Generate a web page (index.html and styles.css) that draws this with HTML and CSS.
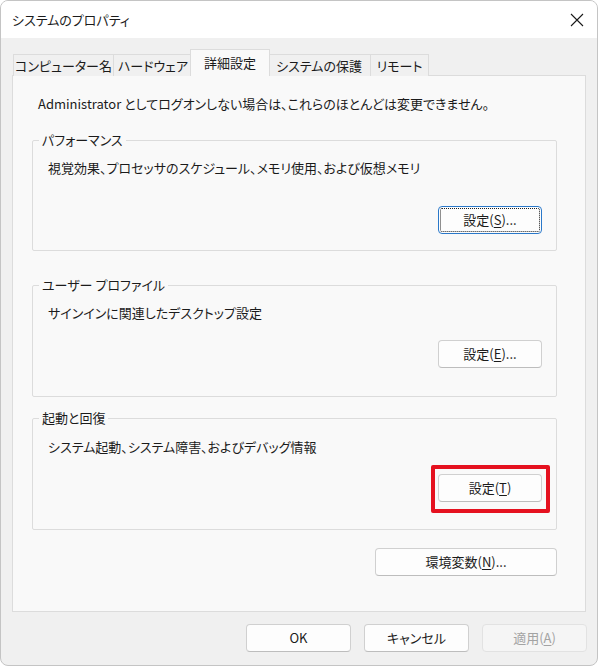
FILE: index.html
```html
<!DOCTYPE html>
<html lang="ja">
<head>
<meta charset="utf-8">
<title>システムのプロパティ</title>
<link rel="stylesheet" href="styles.css">
</head>
<body>
<div class="window">
  <div class="titlebar">
    <span class="title">システムのプロパティ</span>
    <span class="close" aria-label="閉じる">
      <svg width="14" height="14" viewBox="0 0 14 14"><path d="M1 1 L13 13 M13 1 L1 13" stroke="#1a1a1a" stroke-width="1.1" fill="none"/></svg>
    </span>
  </div>
  <div class="body">
    <div class="tabs">
      <div class="tab t1">コンピューター名</div>
      <div class="tab t2">ハードウェア</div>
      <div class="tab t3 active">詳細設定</div>
      <div class="tab t4">システムの保護</div>
      <div class="tab t5">リモート</div>
    </div>
    <div class="panel">
      <p class="intro">Administrator としてログオンしない場合は、これらのほとんどは変更できません。</p>
      <fieldset class="group g1">
        <legend>パフォーマンス</legend>
        <p class="desc">視覚効果、プロセッサのスケジュール、メモリ使用、および仮想メモリ</p>
        <div class="row"><button class="btn focus">設定(<u>S</u>)...</button></div>
      </fieldset>
      <fieldset class="group g2">
        <legend>ユーザー プロファイル</legend>
        <p class="desc">サインインに関連したデスクトップ設定</p>
        <div class="row"><button class="btn">設定(<u>E</u>)...</button></div>
      </fieldset>
      <fieldset class="group g3">
        <legend>起動と回復</legend>
        <p class="desc">システム起動、システム障害、およびデバッグ情報</p>
        <div class="row"><span class="mark"><button class="btn">設定(<u>T</u>)</button></span></div>
      </fieldset>
      <div class="row env"><button class="btn wide">環境変数(<u>N</u>)...</button></div>
    </div>
    <div class="footer">
      <button class="btn fbtn">OK</button>
      <button class="btn fbtn">キャンセル</button>
      <button class="btn fbtn disabled">適用(<u>A</u>)</button>
    </div>
  </div>
</div>
</body>
</html>
```

FILE: styles.css
```css
html, body {
  margin: 0;
  padding: 0;
  background: #ffffff;
}
body {
  font-family: "Noto Sans CJK JP", "Noto Sans", sans-serif;
  font-feature-settings: "palt";
  font-size: 13px;
  color: #1b1b1b;
}
.window {
  width: 598px;
  height: 666px;
  box-sizing: border-box;
  border: 1px solid #c4c4c4;
  border-radius: 8px;
  overflow: hidden;
  display: flex;
  flex-direction: column;
  background: #f0f0f0;
}
.titlebar {
  height: 37px;
  background: #ffffff;
  display: flex;
  align-items: center;
  justify-content: space-between;
  padding: 0 12px 0 11px;
  flex: none;
}
.title {
  font-size: 13px;
  line-height: 18px;
}
.close {
  display: flex;
  width: 14px;
  height: 14px;
  margin-right: 1px;
}
.body {
  flex: 1;
  display: flex;
  flex-direction: column;
}
.tabs {
  display: flex;
  align-items: flex-end;
  padding-left: 12px;
  margin-top: 12px;
  height: 26px;
  position: relative;
  z-index: 1;
  margin-bottom: -1px;
}
.tab {
  height: 22px;
  box-sizing: border-box;
  border: 1px solid #dcdcdc;
  border-bottom: none;
  background: #f0f0f0;
  line-height: 21px;
  text-align: center;
  margin-right: -1px;
}
.t1 { width: 101px; }
.t2 { width: 80px; }
.t3 { width: 80px; }
.t4 { width: 104px; }
.t5 { width: 59px; }
.tab.active {
  height: 27px;
  background: #f9f9f9;
  line-height: 25px;
  margin-left: -2px;
  margin-right: -3px;
  position: relative;
  z-index: 2;
}
.panel {
  flex: 1;
  margin: 0 11px;
  border: 1px solid #dcdcdc;
  background: #f9f9f9;
  padding: 0 28px 0 19px;
  display: flex;
  flex-direction: column;
}
.intro {
  margin: 19px 0 0 6px;
  line-height: 18px;
}
.group {
  margin: 0;
  padding: 0 14px 0 15px;
  border: 1px solid #dcdcdc;
  border-radius: 2px;
  min-width: 0;
}
.group legend {
  padding: 0 3px;
  margin-left: -9px;
  line-height: 18px;
}
.desc {
  margin: 10px 0 0;
  line-height: 18px;
}
.row {
  display: flex;
  justify-content: flex-end;
}
.g1 { margin-top: 18px; padding-bottom: 16px; }
.g1 .row { margin-top: 29px; }
.g2 { margin-top: 25px; padding-bottom: 28px; }
.g2 .row { margin-top: 18px; }
.g3 { margin-top: 12px; padding-bottom: 27px; }
.g3 .desc { margin-top: 11px; }
.g3 .row { margin-top: 18px; }
.env { margin-top: 18px; }
.btn {
  font-family: inherit;
  font-feature-settings: "palt";
  font-size: 13px;
  color: #1b1b1b;
  width: 104px;
  height: 28px;
  box-sizing: border-box;
  border: 1px solid #d0d0d0;
  border-bottom-color: #bdbdbd;
  border-radius: 4px;
  background: #fdfdfd;
  padding: 0;
  line-height: 18px;
}
.btn u {
  text-underline-offset: 2px;
}
.btn.focus {
  border: 1px solid #2a78c9;
  outline: 1px dotted #222;
  outline-offset: -3px;
}
.mark {
  display: flex;
  border: 4px solid #e5111f;
  border-radius: 2px;
  padding: 5px 4px 7px 3px;
  margin: -9px -8px -11px -7px;
}
.btn.wide {
  width: 182px;
}
.footer {
  height: 53px;
  flex: none;
  display: flex;
  justify-content: flex-end;
  align-items: flex-start;
  gap: 13px;
  padding: 12px 10px 0 0;
  box-sizing: border-box;
}
.fbtn {
  width: 105px;
}
.btn.disabled {
  color: #a3a3a3;
  background: #f5f5f5;
  border-color: #e2e2e2;
}
```
